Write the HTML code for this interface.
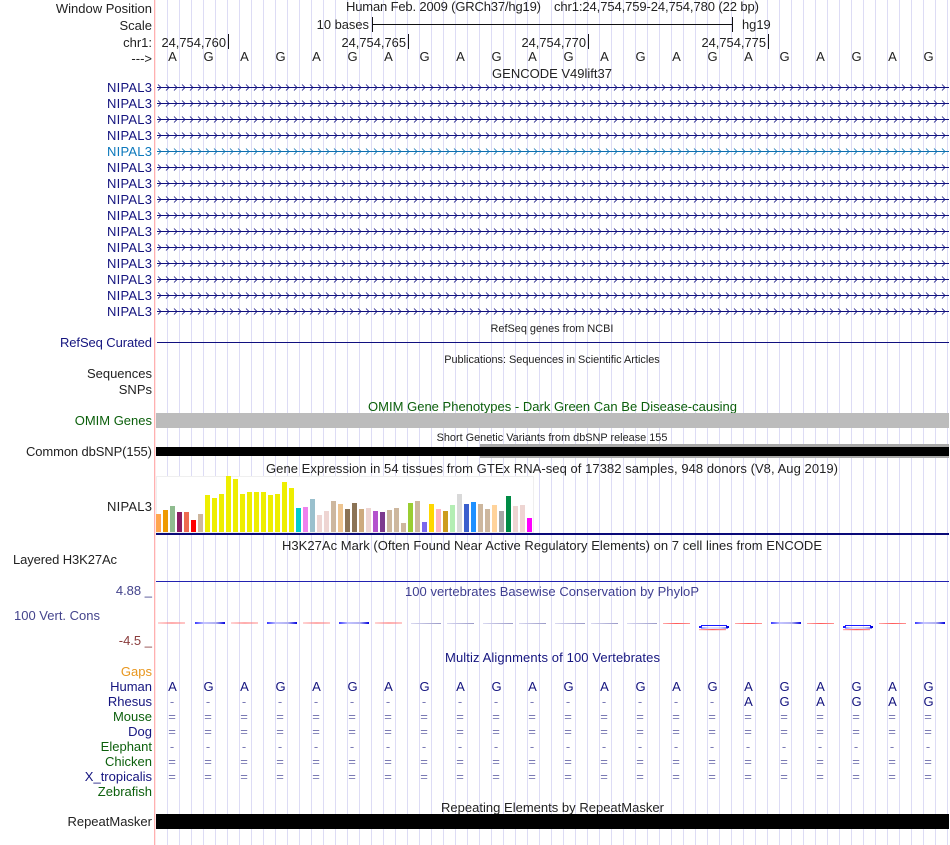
<!DOCTYPE html>
<html><head><meta charset="utf-8"><title>Genome Browser</title>
<style>
html,body{margin:0;padding:0;background:#fff;width:950px;height:845px;overflow:hidden}
svg{display:block}
text{font-family:"Liberation Sans",sans-serif;font-size:13px;fill:#222}
.e{text-anchor:end}.m{text-anchor:middle}
.n{fill:#14147f}.g{fill:#0b5f0b}
.s{font-size:10.9px}
.d{fill:#7a7ab4}
.t{font-size:12.9px}
</style></head><body>
<svg width="950" height="845" viewBox="0 0 950 845" xmlns="http://www.w3.org/2000/svg">
<defs>
<pattern id="grid" patternUnits="userSpaceOnUse" x="167" y="0" width="12" height="10"><rect width="1" height="10" fill="#dddcf5"/></pattern>
<pattern id="chev" patternUnits="userSpaceOnUse" x="157" y="79" width="8" height="16"><rect x="0" y="8" width="8" height="1" fill="#10107f"/><path d="M1 5.5L4 8.5L1 11.5" fill="none" stroke="#10107f" stroke-width=".8"/></pattern>
<pattern id="chevb" patternUnits="userSpaceOnUse" x="157" y="79" width="8" height="16"><rect x="0" y="8" width="8" height="1" fill="#0c70b0"/><path d="M1 5.5L4 8.5L1 11.5" fill="none" stroke="#0c70b0" stroke-width=".8"/></pattern>
<linearGradient id="bl"><stop offset="0" stop-color="#3a3aff"/><stop offset=".3" stop-color="#c4c4ff"/><stop offset=".7" stop-color="#b0b0f0"/><stop offset="1" stop-color="#0000e0"/></linearGradient>
<linearGradient id="rd"><stop offset="0" stop-color="#ffa8a8"/><stop offset=".5" stop-color="#ff5a5a"/><stop offset="1" stop-color="#ff9090"/></linearGradient>
<linearGradient id="gr"><stop offset="0" stop-color="#d8d8f0"/><stop offset="1" stop-color="#9a9ac8"/></linearGradient>
</defs>
<rect x="167" y="0" width="782" height="845" fill="url(#grid)"/>
<rect x="154" y="0" width="1.3" height="845" fill="#ffb0b0"/>

<!-- header -->
<text class="e" x="152" y="13">Window Position</text>
<text class="e" x="152" y="30">Scale</text>
<text class="e" x="152" y="47">chr1:</text>
<text class="e" x="152" y="63">---&gt;</text>
<text x="346" y="11" textLength="195">Human Feb. 2009 (GRCh37/hg19)</text>
<text x="554" y="11" textLength="205">chr1:24,754,759-24,754,780 (22 bp)</text>
<text class="e t" x="369" y="29">10 bases</text>
<text class="t" x="742" y="29">hg19</text>
<rect x="372" y="17" width="1" height="15" fill="#111"/>
<rect x="732" y="17" width="1" height="15" fill="#111"/>
<rect x="372" y="24" width="361" height="1" fill="#111"/>
<text class="e t" x="226" y="47">24,754,760</text>
<text class="e t" x="406" y="47">24,754,765</text>
<text class="e t" x="586" y="47">24,754,770</text>
<text class="e t" x="766" y="47">24,754,775</text>
<rect x="228" y="34" width="1" height="15" fill="#111"/>
<rect x="408" y="34" width="1" height="15" fill="#111"/>
<rect x="588" y="34" width="1" height="15" fill="#111"/>
<rect x="768" y="34" width="1" height="15" fill="#111"/>
<text class="m" x="172.5 208.5 244.5 280.5 316.5 352.5 388.5 424.5 460.5 496.5 532.5 568.5 604.5 640.5 676.5 712.5 748.5 784.5 820.5 856.5 892.5 928.5" y="61">AGAGAGAGAGAGAGAGAGAGAG</text>
<text class="m" x="552" y="78">GENCODE V49lift37</text>

<!-- gene rows -->
<rect x="157" y="79" width="792" height="64" fill="url(#chev)"/>
<rect x="157" y="143" width="792" height="16" fill="url(#chevb)"/>
<rect x="157" y="159" width="792" height="160" fill="url(#chev)"/>
<text class="e n" x="152" y="92" textLength="45">NIPAL3</text>
<text class="e n" x="152" y="108" textLength="45">NIPAL3</text>
<text class="e n" x="152" y="124" textLength="45">NIPAL3</text>
<text class="e n" x="152" y="140" textLength="45">NIPAL3</text>
<text class="e" style="fill:#0c78bc" x="152" y="156" textLength="45">NIPAL3</text>
<text class="e n" x="152" y="172" textLength="45">NIPAL3</text>
<text class="e n" x="152" y="188" textLength="45">NIPAL3</text>
<text class="e n" x="152" y="204" textLength="45">NIPAL3</text>
<text class="e n" x="152" y="220" textLength="45">NIPAL3</text>
<text class="e n" x="152" y="236" textLength="45">NIPAL3</text>
<text class="e n" x="152" y="252" textLength="45">NIPAL3</text>
<text class="e n" x="152" y="268" textLength="45">NIPAL3</text>
<text class="e n" x="152" y="284" textLength="45">NIPAL3</text>
<text class="e n" x="152" y="300" textLength="45">NIPAL3</text>
<text class="e n" x="152" y="316" textLength="45">NIPAL3</text>

<!-- refseq etc -->
<text class="m s" x="552" y="332">RefSeq genes from NCBI</text>
<text class="e n" x="152" y="347" textLength="92">RefSeq Curated</text>
<rect x="157" y="342" width="792" height="1" fill="#10107f"/>
<text class="m s" x="552" y="363">Publications: Sequences in Scientific Articles</text>
<text class="e" x="152" y="378">Sequences</text>
<text class="e" x="152" y="394">SNPs</text>
<text class="m g" x="552.5" y="411" textLength="369">OMIM Gene Phenotypes - Dark Green Can Be Disease-causing</text>
<rect x="156" y="413" width="793" height="15" fill="#bcbcbc"/>
<text class="e g" x="152" y="425">OMIM Genes</text>
<text class="m s" x="552" y="441">Short Genetic Variants from dbSNP release 155</text>
<rect x="480" y="444" width="469" height="14" fill="#a8a8a8"/>
<rect x="156" y="447" width="793" height="9" fill="#000"/>
<text class="e" x="152" y="456" textLength="126">Common dbSNP(155)</text>

<!-- GTEx -->
<text class="m" x="552" y="473" textLength="572">Gene Expression in 54 tissues from GTEx RNA-seq of 17382 samples, 948 donors (V8, Aug 2019)</text>
<rect x="156.5" y="476.5" width="377" height="56" fill="#fff" stroke="#efefef"/>
<text class="e" x="152" y="511" textLength="45">NIPAL3</text>
<g>
<rect x="156" y="514" width="5" height="18" fill="#FFA54F"/>
<rect x="163" y="510" width="5" height="22" fill="#EE9A00"/>
<rect x="170" y="506" width="5" height="26" fill="#8FBC8F"/>
<rect x="177" y="512" width="5" height="20" fill="#8B1C62"/>
<rect x="184" y="512" width="5" height="20" fill="#EE6A50"/>
<rect x="191" y="520" width="5" height="12" fill="#FF0000"/>
<rect x="198" y="514" width="5" height="18" fill="#CDB79E"/>
<rect x="205" y="495" width="5" height="37" fill="#EEEE00"/>
<rect x="212" y="498" width="5" height="34" fill="#EEEE00"/>
<rect x="219" y="494" width="5" height="38" fill="#EEEE00"/>
<rect x="226" y="476" width="5" height="56" fill="#EEEE00"/>
<rect x="233" y="479" width="5" height="53" fill="#EEEE00"/>
<rect x="240" y="494" width="5" height="38" fill="#EEEE00"/>
<rect x="247" y="492" width="5" height="40" fill="#EEEE00"/>
<rect x="254" y="492" width="5" height="40" fill="#EEEE00"/>
<rect x="261" y="492" width="5" height="40" fill="#EEEE00"/>
<rect x="268" y="495" width="5" height="37" fill="#EEEE00"/>
<rect x="275" y="494" width="5" height="38" fill="#EEEE00"/>
<rect x="282" y="482" width="5" height="50" fill="#EEEE00"/>
<rect x="289" y="488" width="5" height="44" fill="#EEEE00"/>
<rect x="296" y="508" width="5" height="24" fill="#00CDCD"/>
<rect x="303" y="507" width="5" height="25" fill="#EE82EE"/>
<rect x="310" y="499" width="5" height="33" fill="#9AC0CD"/>
<rect x="317" y="515" width="5" height="17" fill="#EED5D2"/>
<rect x="324" y="511" width="5" height="21" fill="#EED5D2"/>
<rect x="331" y="501" width="5" height="31" fill="#CDB79E"/>
<rect x="338" y="504" width="5" height="28" fill="#EEC591"/>
<rect x="345" y="509" width="5" height="23" fill="#8B7355"/>
<rect x="352" y="503" width="5" height="29" fill="#8B7355"/>
<rect x="359" y="509" width="5" height="23" fill="#CDAA7D"/>
<rect x="366" y="508" width="5" height="24" fill="#EED5D2"/>
<rect x="373" y="511" width="5" height="21" fill="#B452CD"/>
<rect x="380" y="512" width="5" height="20" fill="#7D3A8F"/>
<rect x="387" y="510" width="5" height="22" fill="#CDB79E"/>
<rect x="394" y="508" width="5" height="24" fill="#CDB79E"/>
<rect x="401" y="523" width="5" height="9" fill="#CDB79E"/>
<rect x="408" y="503" width="5" height="29" fill="#9ACD32"/>
<rect x="415" y="501" width="5" height="31" fill="#CDB79E"/>
<rect x="422" y="522" width="5" height="10" fill="#7B68EE"/>
<rect x="429" y="504" width="5" height="28" fill="#FFD700"/>
<rect x="436" y="509" width="5" height="23" fill="#FFB6C1"/>
<rect x="443" y="511" width="5" height="21" fill="#CD9B1D"/>
<rect x="450" y="505" width="5" height="27" fill="#B4EEB4"/>
<rect x="457" y="494" width="5" height="38" fill="#D9D9D9"/>
<rect x="464" y="504" width="5" height="28" fill="#3A5FCD"/>
<rect x="471" y="502" width="5" height="30" fill="#1E90FF"/>
<rect x="478" y="504" width="5" height="28" fill="#CDB79E"/>
<rect x="485" y="509" width="5" height="23" fill="#CDB79E"/>
<rect x="492" y="505" width="5" height="27" fill="#FFD39B"/>
<rect x="499" y="511" width="5" height="21" fill="#A6A6A6"/>
<rect x="506" y="496" width="5" height="36" fill="#008B45"/>
<rect x="513" y="506" width="5" height="26" fill="#EED5D2"/>
<rect x="520" y="505" width="5" height="27" fill="#EED5D2"/>
<rect x="527" y="518" width="5" height="14" fill="#FF00FF"/>
</g>
<rect x="156" y="533" width="793" height="2" fill="#0a0a78"/>

<!-- H3K27Ac -->
<text class="m" x="552" y="550" textLength="540">H3K27Ac Mark (Often Found Near Active Regulatory Elements) on 7 cell lines from ENCODE</text>
<text x="13" y="564" textLength="104">Layered H3K27Ac</text>
<rect x="156" y="581" width="793" height="1" fill="#2222b0"/>

<!-- PhyloP -->
<text class="m" style="fill:#3e3e90" x="552" y="596" textLength="294">100 vertebrates Basewise Conservation by PhyloP</text>
<text class="e" style="fill:#44448c" x="152" y="595">4.88 _</text>
<text style="fill:#44448c" x="14" y="620">100 Vert. Cons</text>
<text class="e" style="fill:#8a3c3c" x="152" y="645">-4.5 _</text>
<g>
<rect x="158" y="622.5" width="27" height="1" fill="url(#rd)"/>
<rect x="195" y="622" width="30" height="2" fill="url(#bl)"/>
<rect x="231" y="622.5" width="27" height="1" fill="url(#rd)"/>
<rect x="267" y="622" width="30" height="2" fill="url(#bl)"/>
<rect x="303" y="622.5" width="27" height="1" fill="url(#rd)"/>
<rect x="339" y="622" width="30" height="2" fill="url(#bl)"/>
<rect x="375" y="622.5" width="27" height="1" fill="url(#rd)"/>
<rect x="411" y="623" width="30" height="1" fill="url(#gr)"/>
<rect x="447" y="623" width="27" height="1" fill="url(#gr)"/>
<rect x="483" y="623" width="30" height="1" fill="url(#gr)"/>
<rect x="519" y="623" width="27" height="1" fill="url(#gr)"/>
<rect x="555" y="623" width="30" height="1" fill="url(#gr)"/>
<rect x="591" y="623" width="27" height="1" fill="url(#gr)"/>
<rect x="627" y="623" width="30" height="1" fill="url(#gr)"/>
<rect x="663" y="623" width="27" height="1" fill="url(#rd)"/>
<rect x="701" y="625" width="26" height="1" fill="#1a1aff"/>
<rect x="699" y="626" width="3" height="2" fill="#1a1aff"/>
<rect x="726" y="626" width="3" height="2" fill="#0000e0"/>
<rect x="701" y="627.5" width="27" height="1" fill="url(#bl)"/>
<rect x="699" y="629" width="27" height="1.2" fill="url(#rd)"/>
<rect x="735" y="623" width="27" height="1" fill="url(#rd)"/>
<rect x="771" y="622" width="30" height="2" fill="url(#bl)"/>
<rect x="807" y="623" width="27" height="1" fill="url(#rd)"/>
<rect x="845" y="625" width="26" height="1" fill="#1a1aff"/>
<rect x="843" y="626" width="3" height="2" fill="#1a1aff"/>
<rect x="870" y="626" width="3" height="2" fill="#0000e0"/>
<rect x="845" y="627.5" width="27" height="1" fill="url(#bl)"/>
<rect x="843" y="629" width="27" height="1.2" fill="url(#rd)"/>
<rect x="879" y="623" width="27" height="1" fill="url(#rd)"/>
<rect x="915" y="622" width="30" height="2" fill="url(#bl)"/>
</g>

<!-- multiz -->
<text class="m n" x="552.5" y="662" textLength="215">Multiz Alignments of 100 Vertebrates</text>
<text class="e" style="fill:#e8961e" x="152" y="676">Gaps</text>
<text class="e n" x="152" y="691">Human</text>
<text class="e n" x="152" y="706">Rhesus</text>
<text class="e g" x="152" y="721">Mouse</text>
<text class="e n" x="152" y="736">Dog</text>
<text class="e g" x="152" y="751">Elephant</text>
<text class="e g" x="152" y="766">Chicken</text>
<text class="e n" x="152" y="781">X_tropicalis</text>
<text class="e g" x="152" y="796">Zebrafish</text>
<text class="m n" x="172.5 208.5 244.5 280.5 316.5 352.5 388.5 424.5 460.5 496.5 532.5 568.5 604.5 640.5 676.5 712.5 748.5 784.5 820.5 856.5 892.5 928.5" y="691">AGAGAGAGAGAGAGAGAGAGAG</text>
<text class="m d" x="172 208 244 280 316 352 388 424 460 496 532 568 604 640 676 712" y="706">----------------</text>
<text class="m n" x="748.5 784.5 820.5 856.5 892.5 928.5" y="706">AGAGAG</text>
<text class="m d" x="172 208 244 280 316 352 388 424 460 496 532 568 604 640 676 712 748 784 820 856 892 928" y="721">======================</text>
<text class="m d" x="172 208 244 280 316 352 388 424 460 496 532 568 604 640 676 712 748 784 820 856 892 928" y="736">======================</text>
<text class="m d" x="172 208 244 280 316 352 388 424 460 496 532 568 604 640 676 712 748 784 820 856 892 928" y="751">----------------------</text>
<text class="m d" x="172 208 244 280 316 352 388 424 460 496 532 568 604 640 676 712 748 784 820 856 892 928" y="766">======================</text>
<text class="m d" x="172 208 244 280 316 352 388 424 460 496 532 568 604 640 676 712 748 784 820 856 892 928" y="781">======================</text>

<!-- repeatmasker -->
<text class="m" x="552.5" y="812" textLength="223">Repeating Elements by RepeatMasker</text>
<rect x="156" y="814" width="793" height="15" fill="#000"/>
<text class="e" x="152" y="826">RepeatMasker</text>
</svg>
</body></html>
